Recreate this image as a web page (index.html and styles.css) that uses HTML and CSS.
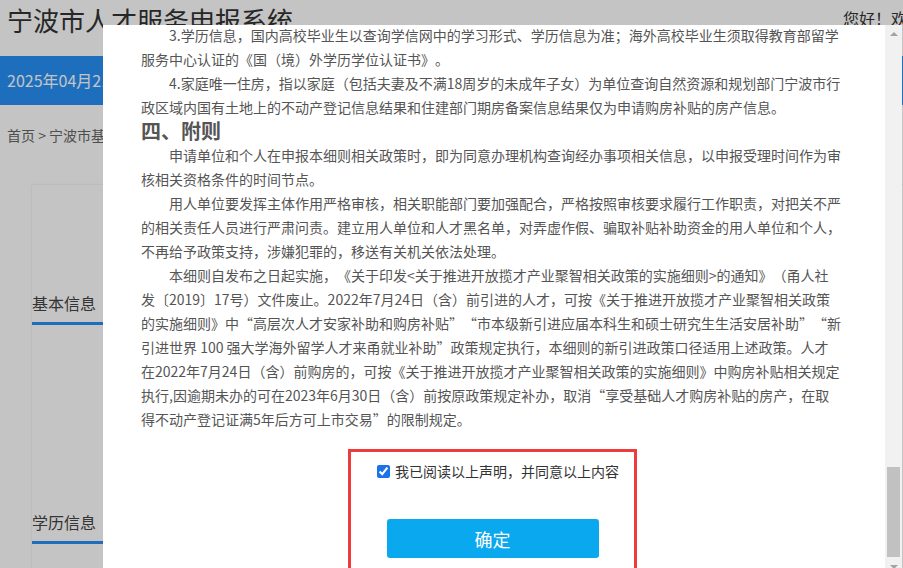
FILE: index.html
```html
<!DOCTYPE html>
<html lang="zh-CN">
<head>
<meta charset="utf-8">
<title>宁波市人才服务申报系统</title>
<link rel="stylesheet" href="styles.css">
</head>
<body>
<div class="page">
  <header class="top">
    <h1 class="site-title">宁波市人才服务申报系统</h1>
    <div class="greet">您好！欢迎您，张三 | 退出</div>
  </header>
  <div class="datebar">2025年04月21日 星期一</div>
  <div class="crumb">首页 &gt; 宁波市基础人才购房补贴申报</div>
  <div class="card">
    <div class="sec-title">基本信息</div>
    <div class="sec-body"></div>
    <div class="sec-title">学历信息</div>
    <div class="sec-body"></div>
  </div>
</div>
<div class="mask"></div>
<div class="dialog">
  <div class="dialog-body">
    <div class="article">
      <p>3.学历信息，国内高校毕业生以查询学信网中的学习形式、学历信息为准；海外高校毕业生须取得教育部留学服务中心认证的《国（境）外学历学位认证书》。</p>
      <p>4.家庭唯一住房，指以家庭（包括夫妻及不满18周岁的未成年子女）为单位查询自然资源和规划部门宁波市行政区域内国有土地上的不动产登记信息结果和住建部门期房备案信息结果仅为申请购房补贴的房产信息。</p>
      <h3>四、附则</h3>
      <p>申请单位和个人在申报本细则相关政策时，即为同意办理机构查询经办事项相关信息，以申报受理时间作为审核相关资格条件的时间节点。</p>
      <p>用人单位要发挥主体作用严格审核，相关职能部门要加强配合，严格按照审核要求履行工作职责，对把关不严的相关责任人员进行严肃问责。建立用人单位和人才黑名单，对弄虚作假、骗取补贴补助资金的用人单位和个人，不再给予政策支持，涉嫌犯罪的，移送有关机关依法处理。</p>
      <p>本细则自发布之日起实施，《关于印发&lt;关于推进开放揽才产业聚智相关政策的实施细则&gt;的通知》（甬人社发〔2019〕17号）文件废止。2022年7月24日（含）前引进的人才，可按《关于推进开放揽才产业聚智相关政策的实施细则》中“高层次人才安家补助和购房补贴”“市本级新引进应届本科生和硕士研究生生活安居补助”“新引进世界 100 强大学海外留学人才来甬就业补助”政策规定执行，本细则的新引进政策口径适用上述政策。人才在2022年7月24日（含）前购房的，可按《关于推进开放揽才产业聚智相关政策的实施细则》中购房补贴相关规定执行,因逾期未办的可在2023年6月30日（含）前按原政策规定补办，取消“享受基础人才购房补贴的房产，在取得不动产登记证满5年后方可上市交易”的限制规定。</p>
    </div>
    <div class="agree-box">
      <label class="agree"><input type="checkbox" checked>我已阅读以上声明，并同意以上内容</label>
      <button class="ok" type="button">确定</button>
    </div>
  </div>
  <div class="scrollbar">
    <div class="sb-btn"><span class="arrow-up"></span></div>
    <div class="sb-track"><div class="sb-thumb"></div></div>
    <div class="sb-btn"><span class="arrow-down"></span></div>
  </div>
</div>
</body>
</html>
```
FILE: styles.css
```css
html, body {
  margin: 0;
  height: 100%;
}
body {
  font-family: "Noto Sans CJK SC", "Microsoft YaHei", sans-serif;
  background: #fff;
  color: #333;
  overflow: hidden;
  text-spacing-trim: space-all;
}

/* background page */
.top {
  display: flex;
  height: 56px;
  padding-left: 7px;
  align-items: flex-start;
}
.site-title {
  margin: 0;
  width: 836px;
  flex: 0 0 836px;
  font-size: 26px;
  font-weight: normal;
  line-height: 40px;
  color: #333;
}
.greet {
  font-size: 16px;
  line-height: 36px;
  white-space: nowrap;
  color: #333;
}
.datebar {
  height: 49px;
  background: #2691f8;
  color: #fff;
  font-size: 16px;
  line-height: 49px;
  padding-left: 7px;
}
.crumb {
  margin-top: 20px;
  padding-left: 7px;
  font-size: 14px;
  line-height: 20px;
  color: #666;
}
.card {
  margin: 40px 0 0 32px;
  width: 1100px;
  height: 600px;
  padding-top: 99px;
  box-sizing: border-box;
  background: #fff;
  box-shadow: 0 0 2px rgba(0, 0, 0, 0.12);
}
.sec-title {
  width: 120px;
  font-size: 16px;
  line-height: 38px;
  color: #444;
  border-bottom: 3px solid #2a8ef5;
}
.sec-body {
  height: 178px;
}

/* mask + dialog */
.mask {
  position: fixed;
  inset: 0;
  background: rgba(0, 0, 0, 0.23);
}
.dialog {
  position: fixed;
  left: 103px;
  top: 25px;
  width: 799px;
  height: 550px;
  background: #fff;
  display: flex;
}
.dialog-body {
  flex: 1;
  overflow: hidden;
  padding-left: 38px;
}
.article {
  width: 700px;
  margin-top: -2px;
  font-size: 14px;
  line-height: 24px;
  color: #555;
}
.article p {
  margin: 0;
  text-indent: 2em;
}
.article h3 {
  margin: 0;
  font-size: 20px;
  line-height: 24px;
  font-weight: bold;
  color: #555;
}
.agree-box {
  margin: 18px 0 0 207px;
  width: 283px;
  border: 3px solid #ee3b3b;
  padding: 7px 0 30px;
}
.agree {
  display: flex;
  align-items: center;
  padding-left: 26px;
  font-size: 14px;
  line-height: 24px;
  color: #333;
}
.agree input {
  width: 13px;
  height: 13px;
  margin: 0 5px 0 0;
  accent-color: #1a73e8;
}
.ok {
  display: block;
  width: 212px;
  height: 39px;
  margin: 36px auto 0;
  border: none;
  border-radius: 3px;
  background: #0aa8ee;
  color: #fff;
  font-family: inherit;
  font-size: 18px;
}

/* scrollbar */
.scrollbar {
  width: 17px;
  background: #f1f1f1;
  display: flex;
  flex-direction: column;
}
.sb-btn {
  height: 17px;
  display: flex;
  align-items: center;
  justify-content: center;
}
.arrow-up {
  width: 0;
  height: 0;
  border-left: 4px solid transparent;
  border-right: 4px solid transparent;
  border-bottom: 4px solid #a3a3a3;
}
.arrow-down {
  width: 0;
  height: 0;
  border-left: 4px solid transparent;
  border-right: 4px solid transparent;
  border-top: 4px solid #a3a3a3;
}
.sb-track {
  flex: 1;
  display: flex;
  flex-direction: column;
  justify-content: flex-end;
  padding-bottom: 1px;
}
.sb-thumb {
  height: 90px;
  margin: 0 2px;
  background: #c1c1c1;
}
```
